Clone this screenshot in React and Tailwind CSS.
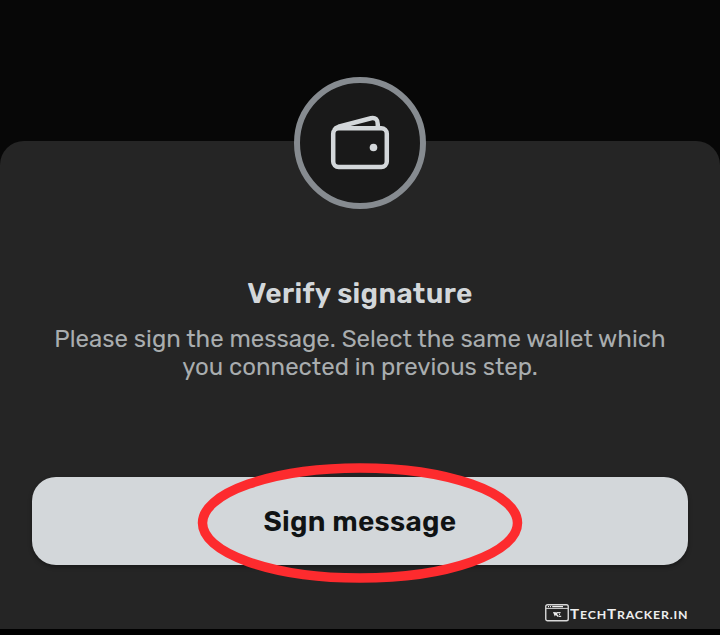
function WalletIcon() {
  return (
    <svg width="60" height="56" viewBox="0 0 60 56" fill="none" stroke="#d3d7da" strokeWidth="4.5" strokeLinejoin="round">
      <rect x="3.2" y="13.2" width="53.6" height="38.8" rx="5.5" />
      <path d="M4.5 14.8 C5.5 12.8 6.5 12.4 8.5 11.8 L41 3.2 Q47.8 2 47.8 9.5 V13" />
      <circle cx="43.5" cy="32.5" r="3.8" fill="#d3d7da" stroke="none" />
    </svg>
  );
}

function Watermark() {
  return (
    <div className="flex h-5 items-center text-[#eeeeee]">
      <svg width="24" height="18" viewBox="0 0 24 18" fill="none">
        <rect x="0.75" y="0.75" width="22.5" height="16" rx="1.8" stroke="#d8d8d8" strokeWidth="1.4" />
        <path d="M1 4.4H23" stroke="#d8d8d8" strokeWidth="1" />
        <path d="M3 2.6h1M5 2.6h1M7.2 2.6H18" stroke="#eeeeee" strokeWidth="1.3" />
        <path d="M8 8 L13 8.6 L12 10 L14 12.3 L12.8 13 L10.8 11 L9.8 12.5Z" fill="#eeeeee" />
        <path d="M12 8.6H15.6M14 10.4H15M14 12.4H16.2" stroke="#dddddd" strokeWidth="1.1" />
      </svg>
      <span className="ml-[1px] mt-[3px] flex w-[118px] origin-left scale-x-[1.12] items-baseline whitespace-nowrap font-['Lato','Open_Sans',sans-serif] text-[11px] font-bold leading-4 tracking-[0.75px]">
        <span className="text-[13.5px]">T</span>ECH<span className="text-[13.5px]">T</span>RACKER.IN
      </span>
    </div>
  );
}

export default function App() {
  return (
    <div className="flex h-[635px] w-[720px] flex-col overflow-hidden bg-[#070707] pt-[141px] font-['Rubik','Roboto',sans-serif]">
      <main className="flex h-[488px] flex-col items-center rounded-t-[24px] bg-[#252525] px-8">
        <div className="-mt-16 flex size-[132px] shrink-0 items-center justify-center rounded-full border-[6px] border-[#868b90] bg-[#191919]">
          <WalletIcon />
        </div>
        <h1 className="mt-[69px] whitespace-nowrap text-[28px] font-semibold leading-8 tracking-[0.3px] text-[#d3d7da]">Verify signature</h1>
        <p className="mt-[15px] whitespace-nowrap text-center text-[24px] leading-7 text-[#a9adaf]">
          Please sign the message. Select the same wallet which<br />you connected in previous step.
        </p>
        <div className="relative mt-24 w-full">
          <button className="block h-[88px] w-full rounded-[24px] bg-[#d3d7da] pt-0.5 text-[28px] font-semibold tracking-[0.28px] text-[#101314] shadow-[0_2px_4px_rgba(0,0,0,0.35)]">
            Sign message
          </button>
          <svg className="pointer-events-none absolute -top-[14px] left-[165px]" width="326" height="120" viewBox="0 0 326 120" fill="none">
            <ellipse cx="163" cy="60" rx="157.5" ry="55" stroke="#fd2b2e" strokeWidth="9.5" />
          </svg>
        </div>
        <div className="mt-[38px] flex w-full justify-end">
          <Watermark />
        </div>
      </main>
      <div className="h-[6px] bg-black" />
    </div>
  );
}
